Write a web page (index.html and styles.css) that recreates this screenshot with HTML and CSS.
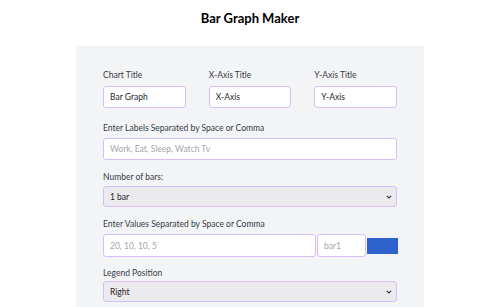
FILE: index.html
```html
<!DOCTYPE html>
<html>
<head>
<meta charset="utf-8">
<link rel="stylesheet" href="styles.css">
</head>
<body>
<h1 class="title">Bar Graph Maker</h1>
<div class="panel">
  <div class="row3">
    <div class="field">
      <label class="lbl">Chart Title</label>
      <input class="inp" type="text" value="Bar Graph">
    </div>
    <div class="field">
      <label class="lbl">X-Axis Title</label>
      <input class="inp" type="text" value="X-Axis">
    </div>
    <div class="field">
      <label class="lbl">Y-Axis Title</label>
      <input class="inp" type="text" value="Y-Axis">
    </div>
  </div>
  <div class="group g1">
    <label class="lbl">Enter Labels Separated by Space or Comma</label>
    <input class="inp" type="text" placeholder="Work, Eat, Sleep, Watch Tv">
  </div>
  <div class="group g2">
    <label class="lbl">Number of bars:</label>
    <div class="selwrap">
      <select class="sel"><option>1 bar</option></select>
      <svg class="chev" width="6" height="4" viewBox="0 0 6 4"><path d="M0.8 0.8 L3 3 L5.2 0.8" fill="none" stroke="#333" stroke-width="1.1"/></svg>
    </div>
  </div>
  <div class="group g3">
    <label class="lbl">Enter Values Separated by Space or Comma</label>
    <div class="vals">
      <input class="inp vinp" type="text" placeholder="20, 10, 10, 5">
      <input class="inp binp" type="text" placeholder="bar1">
      <div class="swatch"></div>
    </div>
  </div>
  <div class="group g4">
    <label class="lbl">Legend Position</label>
    <div class="selwrap">
      <select class="sel"><option>Right</option></select>
      <svg class="chev" width="6" height="4" viewBox="0 0 6 4"><path d="M0.8 0.8 L3 3 L5.2 0.8" fill="none" stroke="#333" stroke-width="1.1"/></svg>
    </div>
  </div>
</div>
</body>
</html>
```
FILE: styles.css
```css
* { box-sizing: border-box; }
body {
  margin: 0;
  background: #ffffff;
  font-family: "Lato", "Noto Sans", sans-serif;
  color: #374151;
}
.title {
  margin: 9px 0 0;
  text-align: center;
  font-size: 13px;
  line-height: 18px;
  font-weight: 700;
  color: #000;
}
.panel {
  width: 348px;
  margin: 19px auto 0;
  background: #f3f4f6;
  padding: 24px 27px 10px;
}
.row3 {
  display: flex;
  gap: 23px;
}
.field { width: 83px; display: flex; flex-direction: column; }
.lbl {
  display: block;
  font-size: 8.5px;
  line-height: 11px;
  color: #363b46;
  margin-bottom: 5px;
}
.inp {
  display: block;
  height: 22px;
  width: 100%;
  border: 1.5px solid #d9bdf6;
  border-radius: 3px;
  background: #fff;
  padding: 0 6px;
  font-family: inherit;
  font-size: 8.5px;
  color: #1f1f1f;
  outline: none;
}
.inp::placeholder { color: #a3a6ad; }
.g1 { margin-top: 15px; }
.g1 .lbl { margin-bottom: 4px; }
.g2 { margin-top: 12px; }
.g2 .lbl { margin-bottom: 3px; }
.g3 { margin-top: 12px; }
.g3 .lbl { margin-bottom: 4px; }
.g4 { margin-top: 11px; }
.g4 .lbl { margin-bottom: 2px; }
.selwrap { position: relative; }
.sel {
  display: block;
  width: 100%;
  height: 21px;
  border: 1.5px solid #d9bdf6;
  border-radius: 3px;
  background: #ebeaee;
  font-family: inherit;
  font-size: 8.5px;
  color: #1f1f1f;
  padding: 0 6px;
  appearance: none;
  -webkit-appearance: none;
  outline: none;
}
.chev {
  position: absolute;
  right: 5px;
  top: 9px;
}
.vals {
  display: flex;
  align-items: center;
  gap: 1px;
}
.vinp { width: 213px; height: 23px; flex: none; }
.binp { width: 49px; height: 23px; flex: none; }
.swatch {
  width: 31px;
  height: 16px;
  background: #2d62cc;
  flex: none;
}
```
